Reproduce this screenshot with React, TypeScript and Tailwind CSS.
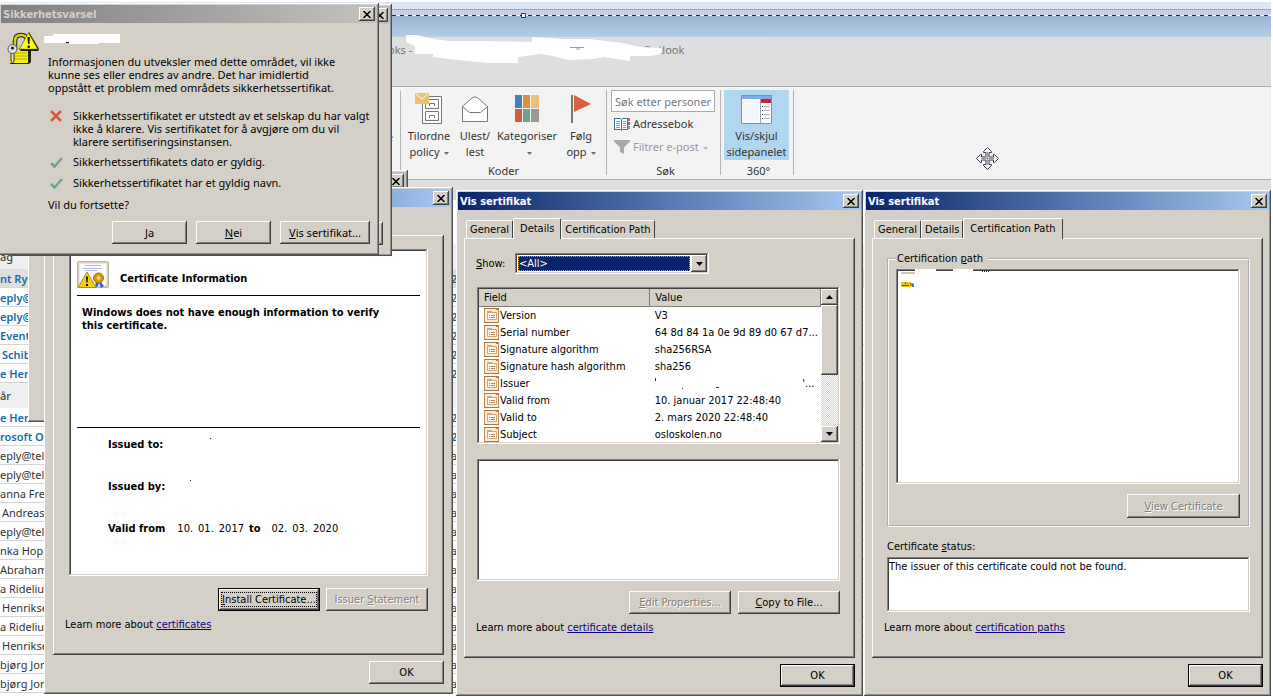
import React from "react";

const raised = "bg-[#d4d0c8] shadow-[inset_-1px_-1px_#404040,inset_1px_1px_#fff,inset_-2px_-2px_#808080]";
const sunken = "bg-white p-[2px] shadow-[inset_-1px_-1px_#fff,inset_1px_1px_#808080,inset_-2px_-2px_#d4d0c8,inset_2px_2px_#404040]";
const tahoma = "font-['DejaVu_Sans_Condensed','DejaVu_Sans',sans-serif] text-[11px] leading-[13px]";
const segoe = "font-['Noto_Sans','Open_Sans',sans-serif] text-[11px] leading-[13px]";

interface MailRow {
  name: string;
  kind: "unread" | "read" | "group" | "selected";
  indent?: boolean;
}

const mails: MailRow[] = [
  { name: "ag", kind: "group" },
  { name: "nt Ryg", kind: "selected" },
  { name: "eply@", kind: "unread" },
  { name: "eply@", kind: "unread" },
  { name: "Event", kind: "unread" },
  { name: "Schib", kind: "unread", indent: true },
  { name: "e Henr", kind: "unread" },
  { name: "år", kind: "group" },
  { name: "e Henr", kind: "unread" },
  { name: "rosoft Ou", kind: "unread" },
  { name: "eply@tele", kind: "read" },
  { name: "eply@tele", kind: "read" },
  { name: "anna Fred", kind: "read" },
  { name: "Andreas", kind: "read", indent: true },
  { name: "eply@tele", kind: "read" },
  { name: "nka Hopp", kind: "read" },
  { name: "Abrahams", kind: "read" },
  { name: "a Rideliu", kind: "read" },
  { name: "Henrikse", kind: "read", indent: true },
  { name: "a Rideliu", kind: "read" },
  { name: "Henrikse", kind: "read", indent: true },
  { name: "bjørg Jor", kind: "read" },
  { name: "bjørg Jor", kind: "read" },
];

const rowStyles = {
  group: "h-[25px] bg-[#efefef] font-medium text-[#444]",
  selected: "h-[19px] bg-[#dfdfdf] font-semibold text-[#1a6aa5] border-b border-[#d5d5d5]",
  unread: "h-[19px] font-semibold text-[#1a6aa5] border-b border-[#d5d5d5]",
  read: "h-[19px] text-[#333] border-b border-[#d5d5d5]",
};

const fields = [
  { field: "Version", value: "V3" },
  { field: "Serial number", value: "64 8d 84 1a 0e 9d 89 d0 67 d7..." },
  { field: "Signature algorithm", value: "sha256RSA" },
  { field: "Signature hash algorithm", value: "sha256" },
  { field: "Issuer", value: "" },
  { field: "Valid from", value: "10. januar 2017 22:48:40" },
  { field: "Valid to", value: "2. mars 2020 22:48:40" },
  { field: "Subject", value: "osloskolen.no" },
];

/* ---------- icons ---------- */

const LockIcon = () => (
  <svg width="32" height="32" viewBox="0 0 32 32" aria-hidden="true">
    <path d="M8 19V9q0-6 6-6 6 0 6 6v10" fill="none" stroke="#222" strokeWidth="4.500" />
    <path d="M8 19V9q0-6 6-6 6 0 6 6v10" fill="none" stroke="#d8cf10" strokeWidth="2.500" />
    <path d="M3 18h20l1 1v11l-2 2H3z" fill="#222" />
    <path d="M3 18h18v13H3z" fill="#f4ee10" />
    <path d="M4 21h16M4 24h16M4 27h16" stroke="#b3a800" />
    <path d="M22 0l10 17-1 2H14l-2-2z" fill="#111" />
    <path d="M21.500 1l9 16h-18z" fill="#ffff10" stroke="#8c8400" strokeWidth=".6" />
    <path d="M20.500 5h2.400l-.5 7h-1.400z" fill="#111" />
    <circle cx="21.700" cy="14.700" r="1.300" fill="#111" />
    <path d="M4 19h3v10l-1.500 2L4 29z" fill="#e2e2e2" stroke="#333" strokeWidth="1" />
    <circle cx="5.500" cy="17" r="4.500" fill="#e2e2e2" stroke="#555" />
    <circle cx="5.500" cy="16" r="1.600" fill="#222" />
  </svg>
);

const CertificateIcon = () => (
  <svg width="32" height="28" viewBox="0 0 32 28" aria-hidden="true">
    <rect x=".5" y=".5" width="31" height="26" rx="1" fill="#d9d2c3" stroke="#b9b1a0" />
    <rect x="2.500" y="2.500" width="27" height="22" fill="#fbfbfd" stroke="#ece8de" />
    <path d="M8 4.500h16M6 7.500h19M8 9.500h12" stroke="#b6bede" />
    <path d="M19 20l-1 7 3-2 1-4zM23 20l4 5-3 2-2-5z" fill="#2b66d8" />
    <circle cx="21.500" cy="17" r="5" fill="#d9930c" stroke="#a86c05" />
    <circle cx="21.500" cy="17" r="2" fill="#f7d35a" />
    <path d="M10 11l9 15.500H1z" fill="#f3cf17" stroke="#b58d00" strokeLinejoin="round" />
    <path d="M8.900 15.500h2.200l-.5 6h-1.200zM9 23h2v2H9z" fill="#111" />
  </svg>
);

const FieldIcon = () => (
  <svg width="15" height="17" viewBox="0 0 15 17" className="shrink-0" aria-hidden="true">
    <path d="M.5 1.500h14v14H.5z" fill="#fdebd2" stroke="#bd8a5e" />
    <path d="M0 1.500h15M0 15.500h15" stroke="#a9774a" />
    <path d="M3.500 5.500h9v7h-9z" fill="#fff9ef" stroke="#d0a67e" />
    <path d="M5 8.500h1M7 8.500h4M5 10.500h1M7 10.500h4" stroke="#b97f52" />
    <path d="M3 4.500h5" stroke="#d0a67e" />
    <path d="M12 2.500h2" stroke="#e0702a" />
  </svg>
);

const PolicyIcon = () => (
  <svg width="28" height="32" viewBox="0 0 28 32" aria-hidden="true">
    <path d="M7.500 3.500h19v27h-19z" fill="#fff" stroke="#777" />
    <path d="M10.500 6.500h13v9h-13zM10.500 18.500h13v9h-13z" fill="#fff" stroke="#777" />
    <path d="M14.500 13v-2.500h5V13M14.500 25v-2.500h5V25" fill="none" stroke="#777" />
    <path d="M0 0h14v11H0z" fill="#ebc176" />
    <path d="M1 1l6 5 6-5" fill="none" stroke="#fff" />
  </svg>
);

const EnvelopeIcon = () => (
  <svg width="28" height="28" viewBox="0 0 28 28" aria-hidden="true">
    <path d="M1.500 26.500v-15L11 3q3-2.500 6 0l9.500 8.500v15z" fill="#fff" stroke="#777" />
    <path d="M1.500 11.500l7 6h11l7-6" fill="none" stroke="#777" />
  </svg>
);

const CategoriesIcon = () => (
  <svg width="24" height="28" viewBox="0 0 24 28" aria-hidden="true">
    <path d="M0 0h7v13H0z" fill="#487eb4" />
    <path d="M8 0h7v13H8z" fill="#e58b3a" />
    <path d="M16 0h8v13h-8z" fill="#ebc27c" />
    <path d="M0 14h7v13H0z" fill="#d65a40" />
    <path d="M8 14h7v13H8z" fill="#6ba58b" />
    <path d="M16 14h8v13h-8z" fill="#9b9b95" />
  </svg>
);

const FlagIcon = () => (
  <svg width="20" height="28" viewBox="0 0 20 28" aria-hidden="true">
    <path d="M0 0h2v28H0z" fill="#777" />
    <path d="M3 0l17 9-17 8z" fill="#d9603f" />
  </svg>
);

const PanelIcon = () => (
  <svg width="31" height="29" viewBox="0 0 31 29" aria-hidden="true">
    <path d="M.5.500h30v28H.5z" fill="#fff" stroke="#8c8c98" />
    <path d="M1 1h29v3H1z" fill="#86a7e8" />
    <path d="M2 5h16v22H2z" fill="#f4f6fd" />
    <path d="M19.500 4v24" stroke="#9aa0b8" />
    <path d="M20 4h10v4H20z" fill="#c32536" />
    <path d="M21 11.500h1M21 15.500h1M21 19.500h1M21 23.500h1" stroke="#444" />
    <path d="M23 11.500h6M23 15.500h6M23 19.500h6M23 23.500h6" stroke="#b8b8b8" />
  </svg>
);

const AddressBookIcon = () => (
  <svg width="16" height="14" viewBox="0 0 16 14" aria-hidden="true">
    <path d="M.5 1.500h6l1 1 1-1h5v11h-5l-1 1-1-1h-6z" fill="#fff" stroke="#3c6c9a" />
    <path d="M7.500 2v11" stroke="#3c6c9a" />
    <path d="M2 4.500h4M2 6.500h4M2 8.500h4M2 10.500h4M9 4.500h3M9 6.500h3M9 8.500h3M9 10.500h3" stroke="#999" />
    <path d="M14 1h2v3h-2z" fill="#d65a40" />
    <path d="M14 5h2v3h-2z" fill="#487eb4" />
    <path d="M14 9h2v3h-2z" fill="#6ba58b" />
  </svg>
);

const FunnelIcon = () => (
  <svg width="16" height="14" viewBox="0 0 16 14" aria-hidden="true">
    <path d="M0 0h16v1.500L10 7.500V14l-4-2V7.500L0 1.500z" fill="#a9a9a9" />
  </svg>
);

const Caret = () => (
  <svg width="5" height="3" viewBox="0 0 5 3" className="ml-1 inline-block align-middle" aria-hidden="true">
    <path d="M0 0h5L2.500 3z" fill="currentColor" opacity=".7" />
  </svg>
);

const Cross = () => (
  <svg width="12" height="12" viewBox="0 0 12 12" className="mt-px" aria-hidden="true">
    <path d="M1 1l10 10M11 1L1 11" stroke="#d0603f" strokeWidth="2.800" />
  </svg>
);

const Check = () => (
  <svg width="13" height="11" viewBox="0 0 13 11" className="mt-[2px]" aria-hidden="true">
    <path d="M1 6l3.500 3.500L12 1" fill="none" stroke="#6ba58b" strokeWidth="2.500" />
  </svg>
);

const MoveCursor = () => (
  <svg width="23" height="23" viewBox="0 0 23 23" className="absolute left-[976px] top-[147px]" aria-hidden="true">
    <path
      d="M11.500.5l4 4v1h-2.500v4.500h4.500V7.500h1l4 4-4 4h-1V13h-4.500v4.500h2.500v1l-4 4-4-4v-1H10V13H5.500v2.500h-1l-4-4 4-4h1V10H10V5.500H7.500v-1z"
      fill="#fff"
      stroke="#333a48"
    />
    <path d="M11.500 5v13M5 11.500h13" stroke="#333a48" strokeWidth=".5" />
  </svg>
);

/* ---------- window parts ---------- */

interface WindowProps {
  title: string;
  active?: boolean;
  className: string;
  children?: React.ReactNode;
}

const Window: React.FC<WindowProps> = ({ title, active = true, className, children }) => (
  <section
    aria-label={title || "Vindu"}
    className={`absolute bg-[#d4d0c8] p-[2px] shadow-[inset_-1px_-1px_#505050,inset_1px_1px_#fff,inset_-2px_-2px_#909090] ${className}`}
  >
    <header
      className={`flex h-[18px] items-center justify-between bg-linear-to-r pr-[2px] pl-[2px] font-bold ${
        active ? "from-[#0a246a] to-[#a6caf0] text-white" : "from-[#808080] to-[#c4c2be] text-[#d4d0c8]"
      }`}
    >
      <span className="font-['DejaVu_Sans_Condensed','DejaVu_Sans',sans-serif] text-[11px] leading-[13px]">{title}</span>
      <button aria-label="Lukk" className={`flex h-[14px] w-[16px] items-center justify-center ${raised}`}>
        <svg width="8" height="7" viewBox="0 0 8 7" aria-hidden="true">
          <path d="M.5 0l7 7M7.500 0l-7 7" stroke="#000" strokeWidth="1.500" />
        </svg>
      </button>
    </header>
    {children}
  </section>
);

interface PushButtonProps {
  children: React.ReactNode;
  className?: string;
  disabled?: boolean;
  isDefault?: boolean;
}

const PushButton: React.FC<PushButtonProps> = ({ children, className = "", disabled = false, isDefault = false }) => (
  <button
    disabled={disabled}
    className={`min-h-[23px] text-center whitespace-nowrap ${raised} ${isDefault ? "border border-black" : ""} ${
      disabled ? "text-[#808080] [text-shadow:1px_1px_#fff]" : "text-black"
    } ${className}`}
  >
    {children}
  </button>
);

const Tabs = ({ selected }: { selected: string }) => (
  <div role="tablist" className="mt-2 flex h-[20px] items-end pl-[2px]">
    {["General", "Details", "Certification Path"].map((tab) => (
      <button
        key={tab}
        role="tab"
        aria-selected={tab === selected}
        className={`rounded-t-[2px] border-t border-r border-l border-t-white border-r-[#404040] border-l-white bg-[#d4d0c8] whitespace-nowrap ${
          tab === selected ? "relative -mb-px h-[21px] px-[6px] pb-[2px]" : "h-[18px] px-[3px]"
        }`}
      >
        {tab}
      </button>
    ))}
  </div>
);

const Panel = ({ children }: { children: React.ReactNode }) => (
  <div className={`flex min-h-[420px] flex-col px-[12px] ${raised}`}>{children}</div>
);

const LearnMore = ({ topic }: { topic: string }) => (
  <p className="pt-px">
    Learn more about{" "}
    <a href="#" className="text-[#0b0080] underline">
      {topic}
    </a>
  </p>
);

/* ---------- windows ---------- */

const SecurityAlert = () => (
  <Window title="Sikkerhetsvarsel" active={false} className={`-left-px top-[3px] w-[380px] ${segoe}`}>
    <div className="flex gap-[9px] pt-[9px] pr-[7px] pb-[9px] pl-[6px]">
      <div className="w-[32px] shrink-0">
        <LockIcon />
      </div>
      <div className="min-w-0 flex-1">
        <svg width="78" height="13" viewBox="0 0 78 13" className="-ml-1" aria-hidden="true">
          <path d="M0 4h9V2h67v9H55v1H25v-1H0z" fill="#fff" />
          <path d="M22 10h3v1h-3z" fill="#111" />
        </svg>
        <p className="mt-[10px] whitespace-nowrap">
          Informasjonen du utveksler med dette området, vil ikke
          <br />
          kunne ses eller endres av andre. Det har imidlertid
          <br />
          oppstått et problem med områdets sikkerhetssertifikat.
        </p>
        <ul className="mt-[15px] flex flex-col gap-[8px] pl-[2px] whitespace-nowrap">
          <li className="-mb-px flex gap-[11px]">
            <Cross />
            <span>
              Sikkerhetssertifikatet er utstedt av et selskap du har valgt
              <br />
              ikke å klarere. Vis sertifikatet for å avgjøre om du vil
              <br />
              klarere sertifiseringsinstansen.
            </span>
          </li>
          <li className="flex gap-[10px]">
            <Check />
            <span>Sikkerhetssertifikatets dato er gyldig.</span>
          </li>
          <li className="flex gap-[10px]">
            <Check />
            <span>Sikkerhetssertifikatet har et gyldig navn.</span>
          </li>
        </ul>
        <p className="mt-[9px]">Vil du fortsette?</p>
        <div className="mt-[10px] flex justify-end gap-[9px]">
          <PushButton className="w-[75px]">
            <u>J</u>a
          </PushButton>
          <PushButton className="w-[75px]">
            <u>N</u>ei
          </PushButton>
          <PushButton className="w-[90px]">
            <u>V</u>is sertifikat...
          </PushButton>
        </div>
      </div>
    </div>
  </Window>
);

const GeneralWindow = () => (
  <Window title="" className={`left-[44px] top-[187px] w-[409px] ${tahoma}`}>
    <div className="px-[7px] pt-[28px] pb-[8px]">
      <Panel>
        <div className={`mt-[14px] mr-[4px] ml-[4px] min-h-[327px] ${sunken}`}>
          <div className="mx-[6px] flex items-center gap-[11px] border-b border-black pt-[10px] pb-[6px] font-bold">
            <CertificateIcon />
            <h2 className="pt-[6px]">Certificate Information</h2>
          </div>
          <div className="mx-[6px] min-h-[132px] border-b border-black pt-[10px] pl-[5px] font-bold whitespace-nowrap">
            Windows does not have enough information to verify
            <br />
            this certificate.
          </div>
          <dl className="flex flex-col gap-[29px] pt-[10px] pl-[37px]">
            <div className="flex gap-[47px]">
              <dt className="font-bold">Issued to:</dt>
              <dd>
                <svg width="2" height="2" aria-hidden="true">
                  <path d="M0 0h1v1H0z" fill="#222" />
                </svg>
              </dd>
            </div>
            <div className="flex gap-[25px]">
              <dt className="font-bold">Issued by:</dt>
              <dd>
                <svg width="2" height="2" aria-hidden="true">
                  <path d="M0 0h1v1H0z" fill="#222" />
                </svg>
              </dd>
            </div>
            <div className="flex">
              <dt className="font-bold">Valid from</dt>
              <dd className="ml-[12px] flex gap-[5px]">
                <span>10.</span>
                <span>01.</span>
                <span>2017</span>
                <b>to</b>
                <span className="ml-[6px]">02.</span>
                <span>03.</span>
                <span>2020</span>
              </dd>
            </div>
          </dl>
        </div>
        <div className="mt-[12px] mr-[4px] mb-[6px] flex justify-end gap-[6px]">
          <PushButton isDefault className="w-[102px] px-[2px]">
            <span className="block border border-dotted border-black">
              <u>I</u>nstall Certificate...
            </span>
          </PushButton>
          <PushButton disabled className="w-[102px]">
            Issuer <u>S</u>tatement
          </PushButton>
        </div>
        <LearnMore topic="certificates" />
      </Panel>
      <div className="mt-[6px] flex justify-end">
        <PushButton className="w-[75px]">OK</PushButton>
      </div>
    </div>
  </Window>
);

const DetailsWindow = () => (
  <Window title="Vis sertifikat" className={`left-[456px] top-[190px] w-[407px] ${tahoma}`}>
    <div className="px-[6px] pb-[7px]">
      <Tabs selected="Details" />
      <Panel>
        <div className="mt-[15px] flex items-center">
          <label htmlFor="show" className="w-[39px]">
            <u>S</u>how:
          </label>
          <div className={`flex h-[21px] w-[194px] ${sunken}`}>
            <select
              id="show"
              className="m-px min-w-0 flex-1 appearance-none border border-dotted border-[#d4a030] bg-[#0a246a] text-white"
            >
              <option>&lt;All&gt;</option>
            </select>
            <span className={`flex w-[16px] items-center justify-center ${raised}`}>
              <svg width="7" height="4" viewBox="0 0 7 4" aria-hidden="true">
                <path d="M0 0h7L3.500 4z" />
              </svg>
            </span>
          </div>
        </div>
        <div className={`mt-[13px] mr-[3px] ml-px flex h-[157px] ${sunken}`}>
          <div className="min-w-0 flex-1 overflow-hidden">
            <table className="w-full table-fixed border-collapse text-left">
              <thead>
                <tr className="h-[17px]">
                  <th className="w-[50%] border-r border-b border-[#808080] bg-[#d4d0c8] p-0 pl-[5px] font-normal">Field</th>
                  <th className="border-r border-b border-l border-[#808080] border-l-white bg-[#d4d0c8] p-0 pl-[5px] font-normal">Value</th>
                </tr>
              </thead>
              <tbody>
                {fields.map((row) => (
                  <tr key={row.field} className="h-[17px]">
                    <td className="p-0 pl-[5px]">
                      <span className="flex h-[17px] items-center gap-px whitespace-nowrap">
                        <FieldIcon />
                        {row.field}
                      </span>
                    </td>
                    <td className="overflow-hidden p-0 pl-[5px] whitespace-nowrap">
                      {row.value || (
                        <span className="flex items-center justify-between pr-[6px]">
                          <svg width="80" height="12" viewBox="0 0 80 12" aria-hidden="true">
                            <path d="M0 1h1v3H0zM27 11h1v1h-1zM61 10h3v1h-3z" fill="#333" />
                          </svg>
                          <span>'...</span>
                        </span>
                      )}
                    </td>
                  </tr>
                ))}
              </tbody>
            </table>
          </div>
          <div className="flex w-[17px] flex-col bg-[repeating-conic-gradient(#d4d0c8_0_25%,#fff_0_50%)] bg-[length:2px_2px]">
            <button aria-label="Rull opp" className={`flex h-[16px] items-center justify-center ${raised}`}>
              <svg width="7" height="4" viewBox="0 0 7 4" aria-hidden="true">
                <path d="M0 4h7L3.500 0z" />
              </svg>
            </button>
            <div className={`h-[70px] ${raised}`} />
            <button aria-label="Rull ned" className={`mt-auto flex h-[16px] items-center justify-center ${raised}`}>
              <svg width="7" height="4" viewBox="0 0 7 4" aria-hidden="true">
                <path d="M0 0h7L3.500 4z" />
              </svg>
            </button>
          </div>
        </div>
        <textarea aria-label="Value" readOnly className={`mt-[15px] mr-[3px] ml-px h-[122px] resize-none ${sunken}`} />
        <div className="mt-[10px] mr-[3px] mb-[6px] flex justify-end gap-[7px]">
          <PushButton disabled className="w-[102px]">
            <u>E</u>dit Properties...
          </PushButton>
          <PushButton className="w-[102px]">
            <u>C</u>opy to File...
          </PushButton>
        </div>
        <LearnMore topic="certificate details" />
      </Panel>
      <div className="mt-[6px] flex justify-end">
        <PushButton isDefault className="w-[75px]">
          OK
        </PushButton>
      </div>
    </div>
  </Window>
);

const PathWindow = () => (
  <Window title="Vis sertifikat" className={`left-[864px] top-[190px] w-[407px] ${tahoma}`}>
    <div className="px-[6px] pb-[7px]">
      <Tabs selected="Certification Path" />
      <Panel>
        <fieldset className="mt-[14px] mr-px ml-[3px] border-2 border-white pr-[8px] pb-[7px] pl-[7px] [border-style:groove]">
          <legend className="pr-[6px] pl-px">
            Certification <u>p</u>ath
          </legend>
          <div className={`mt-[4px] h-[215px] ${sunken}`}>
            <svg width="110" height="24" viewBox="0 0 110 24" className="-mt-[2px]" aria-hidden="true">
              <path d="M17 0h21v3H17zM55 0h20v3H55z" fill="#fff" />
              <path d="M3 4h14" stroke="#9a8f80" />
              <path d="M84 2.500h8" stroke="#222" strokeDasharray="1 1" />
              <path d="M3 13h10v5H3z" fill="#e2c61c" />
              <path d="M7 13h1v2H7zM4 16h7v1H4z" fill="#6b5a10" />
              <path d="M12 14h3v3h-3z" fill="#c08a1c" />
              <path d="M14 15h2v3h-2z" fill="#3f6fb8" />
            </svg>
          </div>
          <div className="mt-[10px] flex justify-end">
            <PushButton disabled className="h-[24px] w-[113px]">
              <u>V</u>iew Certificate
            </PushButton>
          </div>
        </fieldset>
        <label htmlFor="status" className="mt-[13px] ml-[3px]">
          Certificate <u>s</u>tatus:
        </label>
        <div className={`mt-[4px] mr-px mb-[8px] ml-[3px] flex h-[55px] ${sunken}`}>
          <textarea
            id="status"
            readOnly
            defaultValue="The issuer of this certificate could not be found."
            className="flex-1 resize-none pt-px"
          />
        </div>
        <LearnMore topic="certification paths" />
      </Panel>
      <div className="mt-[6px] flex justify-end">
        <PushButton isDefault className="w-[75px]">
          OK
        </PushButton>
      </div>
    </div>
  </Window>
);

/* ---------- mail client behind the windows ---------- */

interface RibbonButtonProps {
  icon: React.ReactNode;
  lines: [string, string];
  caret?: boolean;
  className?: string;
}

const RibbonButton: React.FC<RibbonButtonProps> = ({ icon, lines, caret = false, className = "" }) => (
  <button className={`flex h-[70px] flex-col items-center leading-[16px] whitespace-nowrap ${className}`}>
    <span className="flex h-[38px] items-center justify-center">{icon}</span>
    <span>{lines[0]}</span>
    <span>
      {lines[1]}
      {caret && <Caret />}
    </span>
  </button>
);

const RibbonGroup = ({ label, className, children }: { label: string; className: string; children: React.ReactNode }) => (
  <div className={`mt-[3px] mb-1 flex flex-col justify-between border-r border-[#b5b5b5] ${className}`}>
    <div className="flex">{children}</div>
    <span className="self-center leading-[9px]">{label}</span>
  </div>
);

const MailClient = () => (
  <div className={`mr-[2px] ${segoe} text-[#333]`}>
    <div className="h-[2px] bg-white" />
    <div className="h-[7px] bg-[#dce6f4]" />
    <div className="h-[6px] border-t border-[#9ba6bd] bg-[#c7cee2]" />
    <div className="h-px bg-[repeating-linear-gradient(90deg,#15294d_0_4px,#fff_4px_8px)]" />
    <div className="h-[21px] bg-linear-to-b from-[#97b3d1] to-[#b6cfe8]" />
    <div className="h-[49px] bg-[#dedede] pt-[6px] pl-[388px] text-[#777]">
      <span className="inline-block w-[255px]">oks -</span>
      <span>Outlook</span>
    </div>
    <div className="flex h-[94px] border-y border-[#ababab] bg-[#f3f3f3]">
      <div className="my-1 flex w-[401px] justify-end border-r border-[#b5b5b5] pt-[39px] pr-[7px]">e</div>
      <RibbonGroup label="Koder" className="w-[206px]">
        <RibbonButton icon={<PolicyIcon />} lines={["Tilordne", "policy"]} caret className="w-[56px]" />
        <RibbonButton icon={<EnvelopeIcon />} lines={["Ulest/", "lest"]} className="w-[36px]" />
        <RibbonButton icon={<CategoriesIcon />} lines={["Kategoriser", ""]} caret className="w-[68px]" />
        <RibbonButton icon={<FlagIcon />} lines={["Følg", "opp"]} caret className="w-[40px]" />
      </RibbonGroup>
      <RibbonGroup label="Søk" className="w-[114px] pl-[4px]">
        <div className="flex flex-col items-start">
          <input
            aria-label="Søk etter personer"
            placeholder="Søk etter personer"
            className="h-[22px] w-[104px] border border-[#ababab] bg-white px-[3px] placeholder:text-[#777]"
          />
          <button className="flex h-[23px] items-center gap-[3px] pl-[3px]">
            <AddressBookIcon /> Adressebok
          </button>
          <button className="flex h-[23px] items-center gap-[3px] pl-[3px] whitespace-nowrap text-[#999]">
            <FunnelIcon />
            <span>
              Filtrer e-post
              <Caret />
            </span>
          </button>
        </div>
      </RibbonGroup>
      <RibbonGroup label="360°" className="w-[73px] pl-[3px]">
        <RibbonButton icon={<PanelIcon />} lines={["Vis/skjul", "sidepanelet"]} className="w-[65px] bg-[#b1d6f0]" />
      </RibbonGroup>
    </div>
    <div className="h-[20px] bg-[#dedede]" />
    <div className="h-[44px] bg-white" />
    <ul>
      {mails.map((mail, i) => (
        <li key={i} className={`flex items-center whitespace-nowrap ${rowStyles[mail.kind]}`}>
          <span className={`w-[451px] ${mail.indent ? "pl-[2px]" : ""}`}>{mail.name}</span>
          {mail.kind !== "group" && <span>{mail.kind === "read" ? "a" : "2"}</span>}
        </li>
      ))}
    </ul>
  </div>
);

/* White marker strokes drawn over the account name in the title bar */
const MarkerStroke = () => (
  <svg width="260" height="32" viewBox="406 34 260 32" className="absolute left-[406px] top-[34px]" aria-hidden="true">
    <path
      d="M406 35h11l16 4 17 2h25l57 1v-5l28 2h30l32 4 18 4 22 1-1 6-10 2h-21v5l-26-4-11 2-25 1-15-4-13-2-22 3v6h-31l-29-3-25-3v-3h-18v-8l-9-4z"
      fill="#fff"
    />
    <path d="M570 47.500h14M576 49h4" stroke="#999" />
  </svg>
);

export default function App() {
  return (
    <main className="relative min-h-screen w-full overflow-hidden bg-white text-black">
      <MailClient />
      <MarkerStroke />
      <svg width="6" height="6" viewBox="0 0 6 6" className="absolute left-[521px] top-[13px]" aria-hidden="true">
        <path d="M.5.500h4v4h-4z" fill="#fff" stroke="#333" />
      </svg>
      <MoveCursor />
      <Window title="" active={false} className="left-[28px] top-[170px] h-[252px] w-[380px]" />
      <GeneralWindow />
      <Window title="" active={false} className="left-[12px] top-[4px] flex h-[252px] w-[380px] flex-col">
        <div className="mt-auto flex justify-end pr-[7px] pb-[9px]">
          <button aria-label="Vis sertifikat" className={`h-[23px] w-[90px] ${raised}`} />
        </div>
      </Window>
      <SecurityAlert />
      <DetailsWindow />
      <PathWindow />
    </main>
  );
}
